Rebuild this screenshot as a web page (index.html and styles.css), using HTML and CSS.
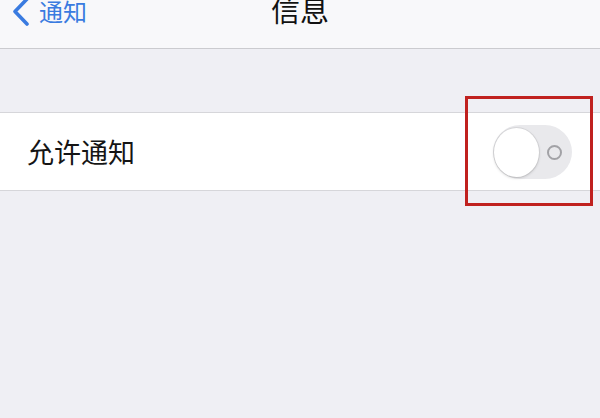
FILE: index.html
```html
<!DOCTYPE html>
<html lang="zh">
<head>
<meta charset="utf-8">
<link rel="stylesheet" href="styles.css">
</head>
<body>
<div class="page">
  <header class="nav">
    <div class="nav-inner">
      <div class="back">
        <svg class="chev" width="20" height="30" viewBox="0 0 20 30"><path d="M16 3 L4 15.5 L16 28" fill="none" stroke="#3a7be0" stroke-width="3.6" stroke-linecap="round" stroke-linejoin="round"/></svg>
        <span class="back-text">通知</span>
      </div>
      <div class="title">信息</div>
    </div>
  </header>
  <div class="gap"></div>
  <section class="row">
    <span class="label">允许通知</span>
    <div class="switch-wrap">
      <div class="switch">
        <div class="knob"></div>
        <div class="off-mark"></div>
      </div>
      <div class="highlight"></div>
    </div>
  </section>
</div>
</body>
</html>
```

FILE: styles.css
```css
html, body {
  margin: 0;
  padding: 0;
}
body {
  width: 600px;
  height: 418px;
  overflow: hidden;
  background: #efeff4;
  font-family: "Noto Sans CJK SC", "Noto Sans", sans-serif;
}
.page {
  display: flex;
  flex-direction: column;
}
.nav {
  height: 48px;
  background: #f8f8fa;
  border-bottom: 1px solid #cbcbcf;
  overflow: hidden;
}
.nav-inner {
  position: relative;
  height: 30px;
  margin-top: -6px;
  display: flex;
  align-items: center;
}
.back {
  display: flex;
  align-items: center;
  padding-left: 11px;
  gap: 8px;
  margin-top: 4px;
}
.chev {
  display: block;
}
.back-text {
  color: #3a7be0;
  font-size: 24px;
  line-height: 30px;
}
.title {
  position: absolute;
  left: 0;
  right: 0;
  top: 0;
  text-align: center;
  font-size: 29px;
  line-height: 30px;
  color: #111;
  padding-left: 0;
}
.gap {
  height: 63px;
}
.row {
  height: 77px;
  background: #fff;
  border-top: 1px solid #d6d6da;
  border-bottom: 1px solid #d6d6da;
  display: flex;
  align-items: center;
  justify-content: space-between;
  padding: 0 27px 0 27px;
}
.label {
  font-size: 27px;
  line-height: 32px;
  color: #151515;
}
.switch-wrap {
  position: relative;
  margin-right: 1px;
}
.switch {
  position: relative;
  width: 79px;
  height: 54px;
  border-radius: 27px;
  background: #e9e9ec;
}
.knob {
  position: absolute;
  left: 1px;
  top: 3px;
  width: 45px;
  height: 49px;
  border-radius: 50%;
  background: #fff;
  box-shadow: 0 1px 3px rgba(0,0,0,0.18), 0 0 0 1px rgba(0,0,0,0.06);
}
.off-mark {
  position: absolute;
  left: 54px;
  top: 20px;
  width: 11px;
  height: 11px;
  border-radius: 50%;
  border: 2px solid #a2a2a6;
}
.highlight {
  position: absolute;
  left: -28px;
  top: -29px;
  width: 122px;
  height: 104px;
  border: 3px solid #c0211f;
}
```
